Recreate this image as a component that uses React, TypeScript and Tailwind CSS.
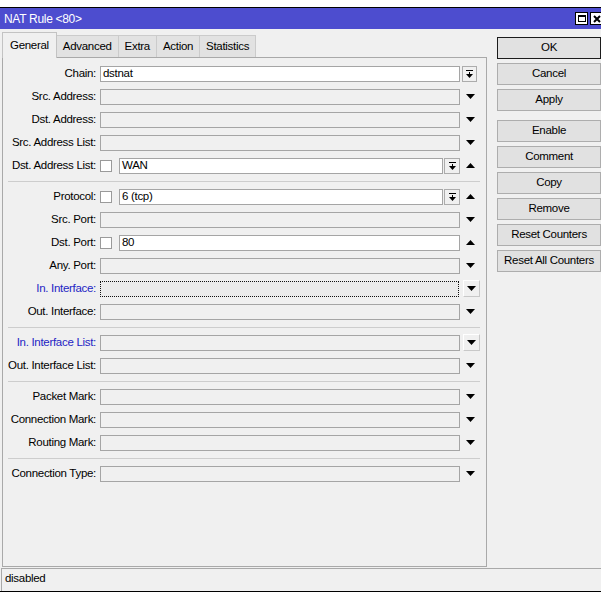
import React from "react";

type Kind = "select" | "plain" | "check" | "checkSelect" | "focus" | "plainBoxed";

type Row = {
  label: string;
  kind: Kind;
  value?: string;
  arrow?: "down" | "up";
  blue?: boolean;
};

// NAT RULE FORM
const SECTIONS: Row[][] = [
  [
    { label: "Chain:", kind: "select", value: "dstnat" },
    { label: "Src. Address:", kind: "plain", arrow: "down" },
    { label: "Dst. Address:", kind: "plain", arrow: "down" },
    { label: "Src. Address List:", kind: "plain", arrow: "down" },
    { label: "Dst. Address List:", kind: "checkSelect", value: "WAN", arrow: "up" },
  ],
  [
    { label: "Protocol:", kind: "checkSelect", value: "6 (tcp)", arrow: "up" },
    { label: "Src. Port:", kind: "plain", arrow: "down" },
    { label: "Dst. Port:", kind: "check", value: "80", arrow: "up" },
    { label: "Any. Port:", kind: "plain", arrow: "down" },
    { label: "In. Interface:", kind: "focus", blue: true },
    { label: "Out. Interface:", kind: "plain", arrow: "down" },
  ],
  [
    { label: "In. Interface List:", kind: "plainBoxed", blue: true },
    { label: "Out. Interface List:", kind: "plain", arrow: "down" },
  ],
  [
    { label: "Packet Mark:", kind: "plain", arrow: "down" },
    { label: "Connection Mark:", kind: "plain", arrow: "down" },
    { label: "Routing Mark:", kind: "plain", arrow: "down" },
  ],
  [{ label: "Connection Type:", kind: "plain", arrow: "down" }],
];

const TABS = ["General", "Advanced", "Extra", "Action", "Statistics"];

const BUTTONS = [
  ["OK", "Cancel", "Apply"],
  ["Enable", "Comment", "Copy", "Remove", "Reset Counters", "Reset All Counters"],
];

function Tri({ up }: { up?: boolean }) {
  return (
    <svg width="9" height="5" viewBox="0 0 9 5">
      {up ? <polygon points="0,5 9,5 4.5,0" fill="#000" /> : <polygon points="0,0 9,0 4.5,5" fill="#000" />}
    </svg>
  );
}

function DropIcon() {
  return (
    <svg width="7" height="8" viewBox="0 0 7 8">
      <rect x="0" y="0" width="7" height="1" fill="#000" />
      <rect x="3" y="2" width="1" height="2" fill="#000" />
      <polygon points="0,4 7,4 3.5,8" fill="#000" />
    </svg>
  );
}

function DropButton({ className = "" }: { className?: string }) {
  return (
    <div
      className={`h-[16px] flex items-center justify-center border border-[#acacac] bg-[#f0f0f0] shrink-0 ${className}`}
    >
      <DropIcon />
    </div>
  );
}

function Field({ value, white }: { value?: string; white?: boolean }) {
  return (
    <div
      className={`flex-1 h-[16px] border border-[#a5a5a5] flex items-center pl-[2px] leading-none ${
        white ? "bg-white" : "bg-[#f0f0f0]"
      }`}
    >
      {value}
    </div>
  );
}

function Check() {
  return <div className="w-[12px] h-[12px] border border-[#9a9a9a] bg-white shrink-0" />;
}

function FormRow({ row }: { row: Row }) {
  let controls: React.ReactNode;
  let slot: React.ReactNode = null;

  if (row.kind === "select") {
    controls = <Field value={row.value} white />;
    slot = <DropButton className="w-[15px] ml-[2px]" />;
  } else if (row.kind === "checkSelect") {
    controls = (
      <>
        <Check />
        <div className="ml-[7px] flex-1 flex">
          <Field value={row.value} white />
        </div>
        <DropButton className="w-[16px] ml-[1px]" />
      </>
    );
  } else if (row.kind === "check") {
    controls = (
      <>
        <Check />
        <div className="ml-[7px] flex-1 flex">
          <Field value={row.value} white />
        </div>
      </>
    );
  } else if (row.kind === "focus") {
    controls = (
      <div className="flex-1 h-[16px] mr-px border border-dotted border-[#111] bg-[#ebebeb]" />
    );
  } else {
    controls = <Field />;
  }

  if (row.kind === "focus" || row.kind === "plainBoxed") {
    slot = (
      <div className="ml-[3px] w-[17px] h-[17px] border border-t-white border-l-white border-r-[#c8c8c8] border-b-[#c8c8c8] bg-[#f0f0f0] flex items-center justify-center">
        <Tri />
      </div>
    );
  } else if (row.arrow) {
    slot = (
      <div className="w-full flex justify-center pl-[1px]">
        <Tri up={row.arrow === "up"} />
      </div>
    );
  }

  return (
    <div className="h-[23px] flex items-center">
      <div className={`w-[93px] text-right whitespace-nowrap ${row.blue ? "text-[#2424c4]" : "text-black"}`}>
        {row.label}
      </div>
      <div className="ml-[4px] w-[360px] flex items-center">{controls}</div>
      <div className="w-[20px] flex items-center">{slot}</div>
    </div>
  );
}

export default function App() {
  return (
    <div
      className="w-[601px] h-[613px] bg-white overflow-hidden text-[11.5px] tracking-[-0.3px] text-black"
      style={{ fontFamily: '"Liberation Sans", Arial, sans-serif' }}
    >
      <div className="h-[7px]" />
      <div className="h-px bg-black" />

      {/* WINDOW */}
      <div className="bg-[#f0f0f0]">
        {/* TITLE BAR */}
        <div className="h-[21px] bg-[#4d4dcf] flex items-center pl-[4px] text-white text-[12px]">
          NAT Rule &lt;80&gt;
          <div className="ml-auto flex items-center gap-[2px] -mr-[2px]">
            <div className="w-[13px] h-[13px] bg-white border border-black flex items-center justify-center">
              <div className="w-[8px] h-[7px] border border-black border-t-2" />
            </div>
            <div className="w-[13px] h-[13px] bg-white border border-black flex items-center justify-center">
              <svg width="8" height="8" viewBox="0 0 8 8">
                <path d="M1 1 L7 7 M7 1 L1 7" stroke="#000" strokeWidth="2" />
              </svg>
            </div>
          </div>
        </div>

        {/* BODY */}
        <div className="h-[539px] flex">
          <div className="w-[487px] flex flex-col">
            <div className="h-[28px] flex items-end pl-[2px]">
              {TABS.map((t, i) =>
                i === 0 ? (
                  <div
                    key={t}
                    className="relative z-10 -mb-px h-[26px] px-[7px] flex items-center bg-[#f0f0f0] border border-b-0 border-[#c3c3c3]"
                  >
                    {t}
                  </div>
                ) : (
                  <div
                    key={t}
                    className="-ml-px h-[22px] px-[6px] flex items-center bg-[#e2e2e2] border border-b-0 border-[#cbcbcb]"
                  >
                    {t}
                  </div>
                )
              )}
            </div>

            <div className="ml-[2px] w-[485px] h-[510px] border border-[#a9a9a9] pt-[4px]">
              {SECTIONS.map((section, si) => (
                <div key={si}>
                  {si > 0 && (
                    <div className="h-[8px] flex items-center pl-[5px] pr-[6px]">
                      <div className="w-full h-px bg-[#cdcdcd]" />
                    </div>
                  )}
                  {section.map((row) => (
                    <FormRow key={row.label} row={row} />
                  ))}
                </div>
              ))}
            </div>
          </div>

          {/* BUTTONS */}
          <div className="flex-1 pl-[10px] pt-[8px] flex flex-col">
            {BUTTONS.map((group, gi) => (
              <div key={gi} className={`flex flex-col gap-[4px] ${gi > 0 ? "mt-[9px]" : ""}`}>
                {group.map((b) => (
                  <div
                    key={b}
                    className={`w-[104px] h-[22px] flex items-center justify-center bg-[#e1e1e1] border ${
                      b === "OK" ? "border-[#1c1c1c]" : "border-[#adadad]"
                    }`}
                  >
                    {b}
                  </div>
                ))}
              </div>
            ))}
          </div>
        </div>

        {/* STATUS BAR */}
        <div className="h-[23px] ml-px border-l border-t border-[#a9a9a9] flex items-center pl-[3px] pb-[2px]">
          disabled
        </div>
      </div>
      <div className="h-px bg-black" />
    </div>
  );
}
